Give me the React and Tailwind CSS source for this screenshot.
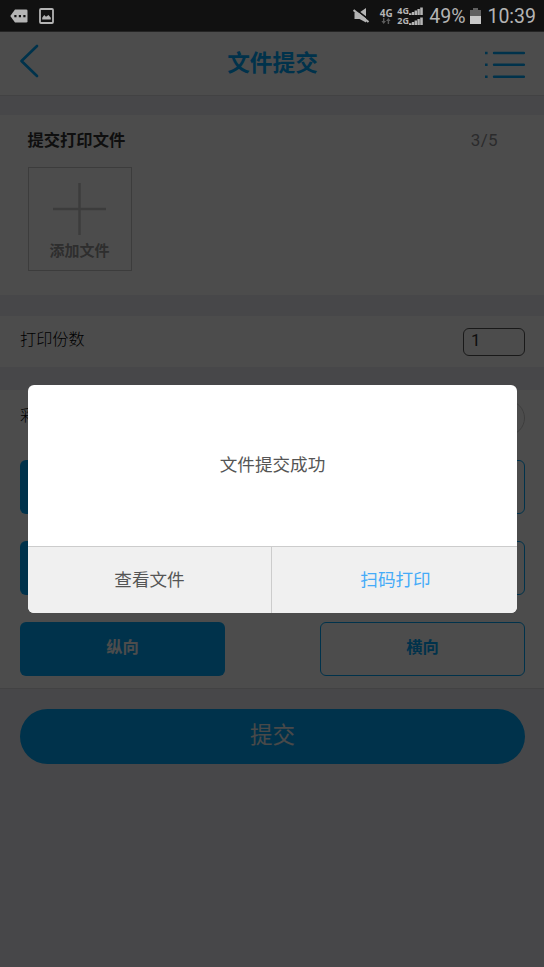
// only the last pair has captions here, the dialog sits over the other two
const OPTION_ROWS = [
  { id: "color" },
  { id: "sides" },
  { id: "orientation", left: "纵向", right: "横向" },
];

export default function App() {
  return (
    <main className="relative flex h-[967px] w-full flex-col overflow-hidden bg-[#efeff4] font-['Roboto','Noto_Sans_CJK_SC',sans-serif] text-[#333]">
      <StatusBar />
      <div className="relative flex flex-1 flex-col">
        <Header />
        <FileSection />
        <CopiesRow />
        <PrintOptions />

        <div className="px-5 pt-5">
          <button className="flex h-[55px] w-[505px] items-center justify-center rounded-full bg-[#00a8fa] pb-[2px] text-[22.5px] text-[#f4f4f4]">
            提交
          </button>
        </div>

        <div className="absolute inset-0 bg-black/70 pt-[353px] pl-7">
          <SuccessDialog />
        </div>
      </div>
    </main>
  );
}

function StatusBar() {
  return (
    <div className="flex h-8 shrink-0 items-center justify-between border-b border-[#242424] bg-[#111] pr-2 pl-[10px] text-[#b4b4b4]">
      <div className="flex items-center gap-[11px]">
        <svg width="18" height="14" viewBox="0 0 18 14">
          <path d="M5 .5h11.2q1.3 0 1.3 1.3v10.4q0 1.3-1.3 1.3H5L.3 7z" fill="currentColor" />
          <path d="M4.3 6h2.2v2.2H4.3zM8.8 6H11v2.2H8.8zM13.3 6h2.2v2.2h-2.2z" fill="#111" />
        </svg>
        <svg width="15" height="16" viewBox="0 0 15 16">
          <rect x="1" y="1" width="13" height="14" rx="1" fill="none" stroke="currentColor" strokeWidth="1.8" />
          <path d="M3.2 11.5V9.8l2-2.8 1.8 1.7L9.5 7l2.3 2.8v1.7z" fill="currentColor" />
        </svg>
      </div>

      <div className="flex items-center">
        <svg className="mr-[9px]" width="17" height="16" viewBox="0 0 17 16">
          <path d="M1.5 4.5h5L13 0v14.5L6.5 11h-5z" fill="currentColor" />
          <path d="M1 .2 16.5 12" stroke="#111" strokeWidth="1.6" />
          <path d="M.5 2 15.5 14" stroke="currentColor" strokeWidth="2.2" />
        </svg>
        <div className="mr-1 flex w-[14px] flex-col items-center pt-px font-['Open_Sans'] text-[10px] leading-[10px] font-bold">
          4G
          <svg width="10" height="6" viewBox="0 0 10 6" fill="#5c5c5c">
            <path d="M2 0h1.4v3H5L2.7 6 .4 3H2zM6.7 6h1.4V3h1.5L7.4 0 5.1 3h1.6z" />
          </svg>
        </div>
        <div className="mr-[6px] flex flex-col gap-[2px]">
          <SimSignal label="4G" />
          <SimSignal label="2G" />
        </div>
        <span className="mr-[5px] pt-[3px] text-[19.5px] leading-6">49%</span>
        <svg className="mr-[6px]" width="11" height="16" viewBox="0 0 11 16">
          <path d="M3 0h5v2h3v14H0V2h3z" fill="#606060" />
          <path d="M0 8h11v8H0z" fill="#c8c8c8" />
        </svg>
        <span className="pt-[3px] text-[19.5px] leading-6">10:39</span>
      </div>
    </div>
  );
}

function SimSignal({ label }) {
  return (
    <div className="flex h-[8px] items-center font-['Open_Sans'] text-[9px] leading-[8px] font-bold">
      <span className="w-3">{label}</span>
      <svg width="14" height="8" viewBox="0 0 14 8" fill="currentColor">
        <path d="M0 6.2h2.4V8H0zM2.8 5h2.4v3H2.8zM5.6 3.6H8V8H5.6zM8.4 2h2.4v6H8.4zM11.2.5h2.6V8h-2.6z" />
      </svg>
    </div>
  );
}

function Header() {
  return (
    <header className="flex h-16 items-center justify-between border-b border-[#dcdce0] bg-white pr-[19px] pl-[19px] text-[#00a8fa]">
      <svg className="mb-[5px]" width="40" height="34" viewBox="0 0 40 34" fill="none">
        <path d="M18 2 2.5 17 18 32" stroke="currentColor" strokeWidth="2.7" strokeLinecap="round" strokeLinejoin="round" />
      </svg>
      <h1 className="pl-px text-[22.7px] leading-8 font-bold">文件提交</h1>
      <svg className="mt-[2px]" width="40" height="28" viewBox="0 0 40 28" fill="none" stroke="currentColor" strokeWidth="2.4">
        <path d="M0 2h2.6M0 13.8h2.6M0 25.7h2.6" />
        <path d="M9 2h30M9 13.8h30M9 25.7h30" strokeLinecap="round" />
      </svg>
    </header>
  );
}

function FileSection() {
  return (
    <section className="mt-[19px] h-[180px] bg-white pt-3 pr-[46px] pl-7">
      <div className="flex h-[27px] items-center justify-between">
        <h2 className="-ml-[0.5px] pt-px text-[16.3px] font-bold">提交打印文件</h2>
        <span className="text-[17px] tracking-[0.4px] text-[#8f8f94]">3/5</span>
      </div>
      <div className="mt-[13px] flex h-[104px] w-[104px] flex-col items-center border border-[#c8c8c8] pt-[14px]">
        <svg className="-ml-[2px]" width="53" height="53" viewBox="0 0 53 53" stroke="#c8c8c8" strokeWidth="2.4">
          <path d="M0 27h53M26.5 1v52" />
        </svg>
        <span className="mt-[4px] -ml-px text-[15px] leading-6 font-bold text-[#999]">添加文件</span>
      </div>
    </section>
  );
}

function CopiesRow() {
  return (
    <section className="mt-[21px] flex h-[51px] items-center justify-between bg-white pr-[19px] pl-5">
      <span className="pb-[3px] text-[16.2px] font-light text-black">打印份数</span>
      <div className="flex h-7 w-[62px] items-center rounded-[6px] border border-[#555] pb-px pl-[7px] text-[17px]">
        1
      </div>
    </section>
  );
}

function PrintOptions() {
  return (
    <section className="mt-[23px] flex h-[299px] flex-col border-b border-[#dcdce0] bg-white pr-[19px] pl-5">
      <div className="flex h-[52px] items-center justify-between pt-1">
        <span className="pb-1 text-[16.2px] font-light text-black">彩色</span>
        <div className="h-9 w-[62px] rounded-full border border-[#ccc]" />
      </div>
      <div className="mt-[18px] flex flex-col gap-[27px]">
        {OPTION_ROWS.map((row) => (
          <div className="flex justify-between text-[16.3px] font-bold" key={row.id}>
            <button className="flex h-[54px] w-[205px] items-center justify-center rounded-[6px] bg-[#00a8fa] pb-px text-white">
              {row.left}
            </button>
            <button className="flex h-[54px] w-[205px] items-center justify-center rounded-[6px] border border-[#00a8fa] pb-px text-[#00a8fa]">
              {row.right}
            </button>
          </div>
        ))}
      </div>
    </section>
  );
}

function SuccessDialog() {
  return (
    <div className="flex h-[228px] w-[489px] flex-col overflow-hidden rounded-[6px] bg-white text-[17.6px]">
      <div className="flex h-[161px] items-center justify-center pb-px text-[#555]">文件提交成功</div>
      <div className="flex flex-1 border-t border-[#ccc] bg-[#f0f0f0]">
        <button className="w-[244px] border-r border-[#ccc] text-[#555]">查看文件</button>
        <button className="flex-1 pl-[2px] text-[#45abf8]">扫码打印</button>
      </div>
    </div>
  );
}
